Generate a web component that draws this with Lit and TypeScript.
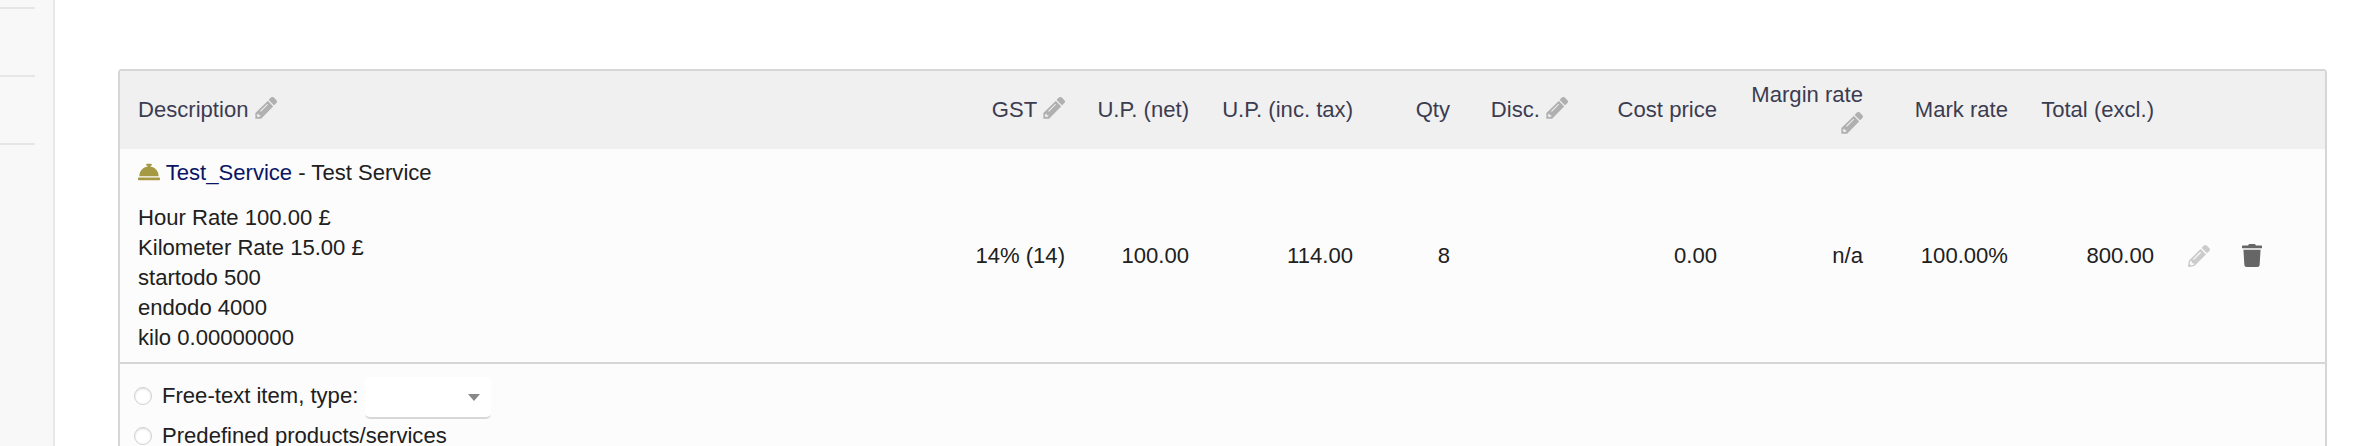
import { LitElement, html, css } from "lit";
import { customElement } from "lit/decorators.js";

const PENCIL =
  "M497.9 142.1l-46.1 46.1c-4.7 4.7-12.3 4.7-17 0l-111-111c-4.7-4.7-4.7-12.3 0-17l46.1-46.1c18.7-18.7 49.1-18.7 67.9 0l60.1 60.1c18.8 18.7 18.8 49.1 0 67.9zM284.2 99.8L21.6 362.4.4 483.9c-2.9 16.4 11.4 30.6 27.8 27.8l121.5-21.3 262.6-262.6c4.7-4.7 4.7-12.3 0-17l-111-111c-4.8-4.7-12.4-4.7-17.1 0zM124.1 339.9c-5.5-5.5-5.5-14.3 0-19.8l154-154c5.5-5.5 14.3-5.5 19.8 0s5.5 14.3 0 19.8l-154 154c-5.5 5.5-14.3 5.5-19.8 0zM88 424h48v36.3l-64.5 11.3-31.1-31.1L51.7 376H88v48z";
const PENCIL_SQUARE =
  "M498 142l-46 46c-5 5-12 5-17 0L324 77c-5-5-5-12 0-17l46-46c19-19 49-19 68 0l60 60c19 19 19 49 0 68zM290 96L8 374V505H142L416 228c5-5 5-12 0-17L307 96c-5-5-12-5-17 0zM124 337c-5-5-5-12 0-17l154-154c5-5 13-5 18 0s5 12 0 17l-154 154c-5 5-13 5-18 0zM84 424h42v16l-28 28H70l-26-26v-28l26-26h14v36z";
const TRASH =
  "M432 32H312l-9.4-18.7A24 24 0 0 0 281.1 0H166.8a23.72 23.72 0 0 0-21.4 13.3L136 32H16A16 16 0 0 0 0 48v32a16 16 0 0 0 16 16h416a16 16 0 0 0 16-16V48a16 16 0 0 0-16-16zM53.2 467a48 48 0 0 0 47.9 45h245.8a48 48 0 0 0 47.9-45L416 128H32z";
const BELL =
  "M288 130.54V112h16c8.84 0 16-7.16 16-16V80c0-8.84-7.16-16-16-16h-96c-8.84 0-16 7.16-16 16v16c0 8.84 7.16 16 16 16h16v18.54C115.49 146.11 32 239.18 32 352h448c0-112.82-83.49-205.89-192-221.46zM496 384H16c-8.84 0-16 7.16-16 16v32c0 8.84 7.16 16 16 16h480c8.84 0 16-7.16 16-16v-32c0-8.84-7.16-16-16-16z";

const icon = (path: string, cls: string, box = "0 0 512 512") =>
  html`<svg class="icon ${cls}" viewBox=${box}><path fill="currentColor" d=${path}></path></svg>`;

const columns = [
  { title: "GST", value: "14% (14)", editable: true },
  { title: "U.P. (net)", value: "100.00" },
  { title: "U.P. (inc. tax)", value: "114.00" },
  { title: "Qty", value: "8" },
  { title: "Disc.", value: "", editable: true },
  { title: "Cost price", value: "0.00" },
  { title: "Margin rate", value: "n/a", editable: true },
  { title: "Mark rate", value: "100.00%" },
  { title: "Total (excl.)", value: "800.00" },
];

const details = [
  "Hour Rate 100.00 £",
  "Kilometer Rate 15.00 £",
  "startodo 500",
  "endodo 4000",
  "kilo 0.00000000",
];

@customElement("app-root")
export class AppRoot extends LitElement {
  static styles = css`
    :host {
      display: flex;
      height: 446px;
      overflow: hidden;
      background: #fff;
      color: #202020;
      font: 22.08px/30px "Liberation Sans", Arial, sans-serif;
    }
    * { box-sizing: border-box; }
    .side {
      flex: none;
      width: 55px;
      background: #f8f8f8;
      border-right: 2px solid #e9e9e9;
      padding: 7px 18px 0 0;
    }
    .rule { height: 2px; background: #e6e6e6; margin-bottom: 66px; }
    .main { flex: 1; padding: 69px 31px 0 63px; }
    .table {
      height: 420px;
      border: 2px solid #d6d6d6;
      border-radius: 4px 4px 0 0;
      background: #fcfcfc;
    }
    .row {
      display: grid;
      grid-template-columns: 827px 118px 124px 164px 97px 118px 149px 146px 145px 146px 56px 52px;
      align-items: center;
    }
    .head { height: 78px; background: #f0f0f0; color: #3c3c50; }
    .line { height: 215px; border-bottom: 2px solid #d6d6d6; }
    .desc { padding-left: 18px; }
    .num { text-align: right; white-space: nowrap; }
    .wrap { white-space: normal; padding-left: 20px; }
    .center { display: flex; justify-content: flex-end; }
    .icon { width: 22px; height: 22px; vertical-align: -3px; }
    .edit { color: #b0b0b0; vertical-align: -2px; }
    .light { color: #ccc; }
    .trash { color: #666; width: 20px; height: 23px; }
    .bell { color: #a69944; }
    .product { margin-bottom: 15px; }
    .link { color: #0a1464; }
    .option { display: flex; align-items: center; padding-left: 14px; height: 40px; }
    .first { margin-top: 12px; }
    .radio {
      width: 18px;
      height: 18px;
      margin-right: 10px;
      border: 1px solid #d0d0d0;
      border-radius: 50%;
      background: #fff;
      box-shadow: inset 0 1px 2px #ddd;
    }
    .select {
      width: 126px;
      height: 42px;
      margin: 4px 0 0 7px;
      border-bottom: 2px solid #d8d8d8;
      border-radius: 5px;
      background: #fff;
      display: flex;
      align-items: center;
      justify-content: flex-end;
      padding-right: 11px;
    }
    .caret { border: 6px solid transparent; border-top: 7px solid #888; border-bottom: 0; }
  `;

  render() {
    return html`
      <div class="side">
        <div class="rule"></div>
        <div class="rule"></div>
        <div class="rule"></div>
      </div>
      <div class="main">
        <div class="table">
          <div class="row head">
            <div class="desc">Description ${icon(PENCIL_SQUARE, "edit")}</div>
            ${columns.map(
              (c) => html`<div class="num ${c.title === "Margin rate" ? "wrap" : ""}">${c.title}${c.editable ? html` ${icon(PENCIL_SQUARE, "edit")}` : ""}</div>`
            )}
          </div>
          <div class="row line">
            <div class="desc">
              <div class="product">${icon(BELL, "bell")} <span class="link">Test_Service</span> - Test Service</div>
              ${details.map((d) => html`<div>${d}</div>`)}
            </div>
            ${columns.map((c) => html`<div class="num">${c.value}</div>`)}
            <div class="center">${icon(PENCIL, "light")}</div>
            <div class="center">${icon(TRASH, "trash", "0 0 448 512")}</div>
          </div>
          <div class="option first">
            <span class="radio"></span>Free-text item, type:
            <span class="select"><span class="caret"></span></span>
          </div>
          <div class="option"><span class="radio"></span>Predefined products/services</div>
        </div>
      </div>
    `;
  }
}
